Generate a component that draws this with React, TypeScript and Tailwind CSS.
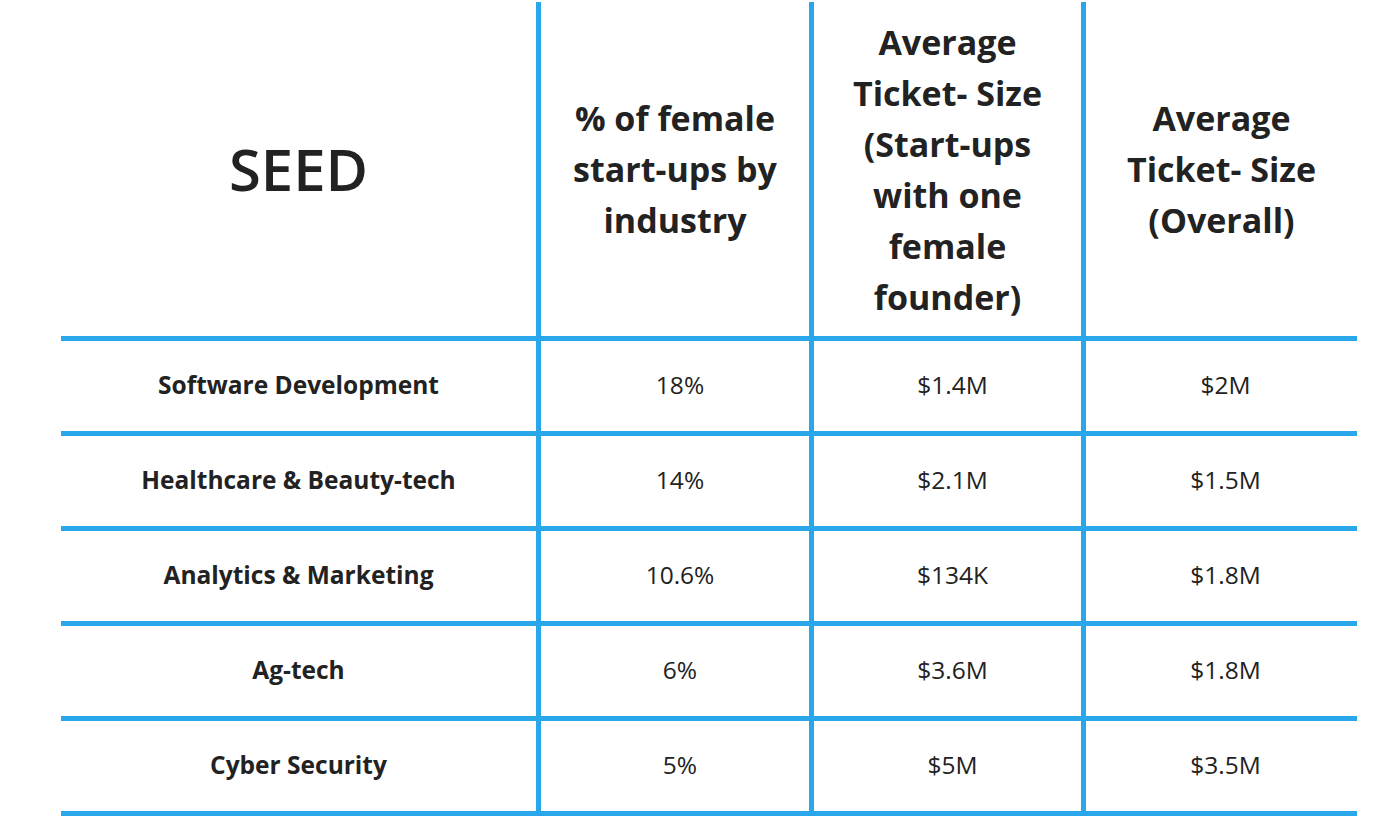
import React from "react";

const rows = [
  ["Software Development", "18%", "$1.4M", "$2M"],
  ["Healthcare & Beauty-tech", "14%", "$2.1M", "$1.5M"],
  ["Analytics & Marketing", "10.6%", "$134K", "$1.8M"],
  ["Ag-tech", "6%", "$3.6M", "$1.8M"],
  ["Cyber Security", "5%", "$5M", "$3.5M"],
];

export default function App() {
  const head =
    "flex items-center justify-center text-center border-b-[5px] border-[#29a7ea] h-[339px] font-bold text-[34px] leading-[51px]";
  const cell =
    "flex items-center justify-center text-center border-b-[5px] border-[#29a7ea] h-[95px] text-[24.5px] pb-[2px]";
  return (
    <div
      className="w-[1374px] h-[836px] bg-white text-[#222222] pt-[2px]"
      style={{ fontFamily: '"Open Sans", "Noto Sans", sans-serif' }}
    >
      <div className="ml-[61px] w-[1296px] grid grid-cols-[475px_273px_272px_276px]">
        <div className={head}>
          <span className="text-[58px] font-semibold leading-none pb-[1px]">SEED</span>
        </div>
        <div className={head + " border-l-[5px]"}>
          <span>
            % of female
            <br />
            start-ups by
            <br />
            industry
          </span>
        </div>
        <div className={head + " border-l-[5px]"}>
          <span className="pt-[2px]">
            Average
            <br />
            Ticket- Size
            <br />
            (Start-ups
            <br />
            with one
            <br />
            female
            <br />
            founder)
          </span>
        </div>
        <div className={head + " border-l-[5px]"}>
          <span>
            Average
            <br />
            Ticket- Size
            <br />
            (Overall)
          </span>
        </div>
        {rows.map((r, i) => (
          <React.Fragment key={i}>
            <div className={cell + " font-bold"}>{r[0]}</div>
            <div className={cell + " border-l-[5px] pl-[10px]"}>{r[1]}</div>
            <div className={cell + " border-l-[5px] pl-[10px]"}>{r[2]}</div>
            <div className={cell + " border-l-[5px] pl-[8px]"}>{r[3]}</div>
          </React.Fragment>
        ))}
      </div>
    </div>
  );
}
